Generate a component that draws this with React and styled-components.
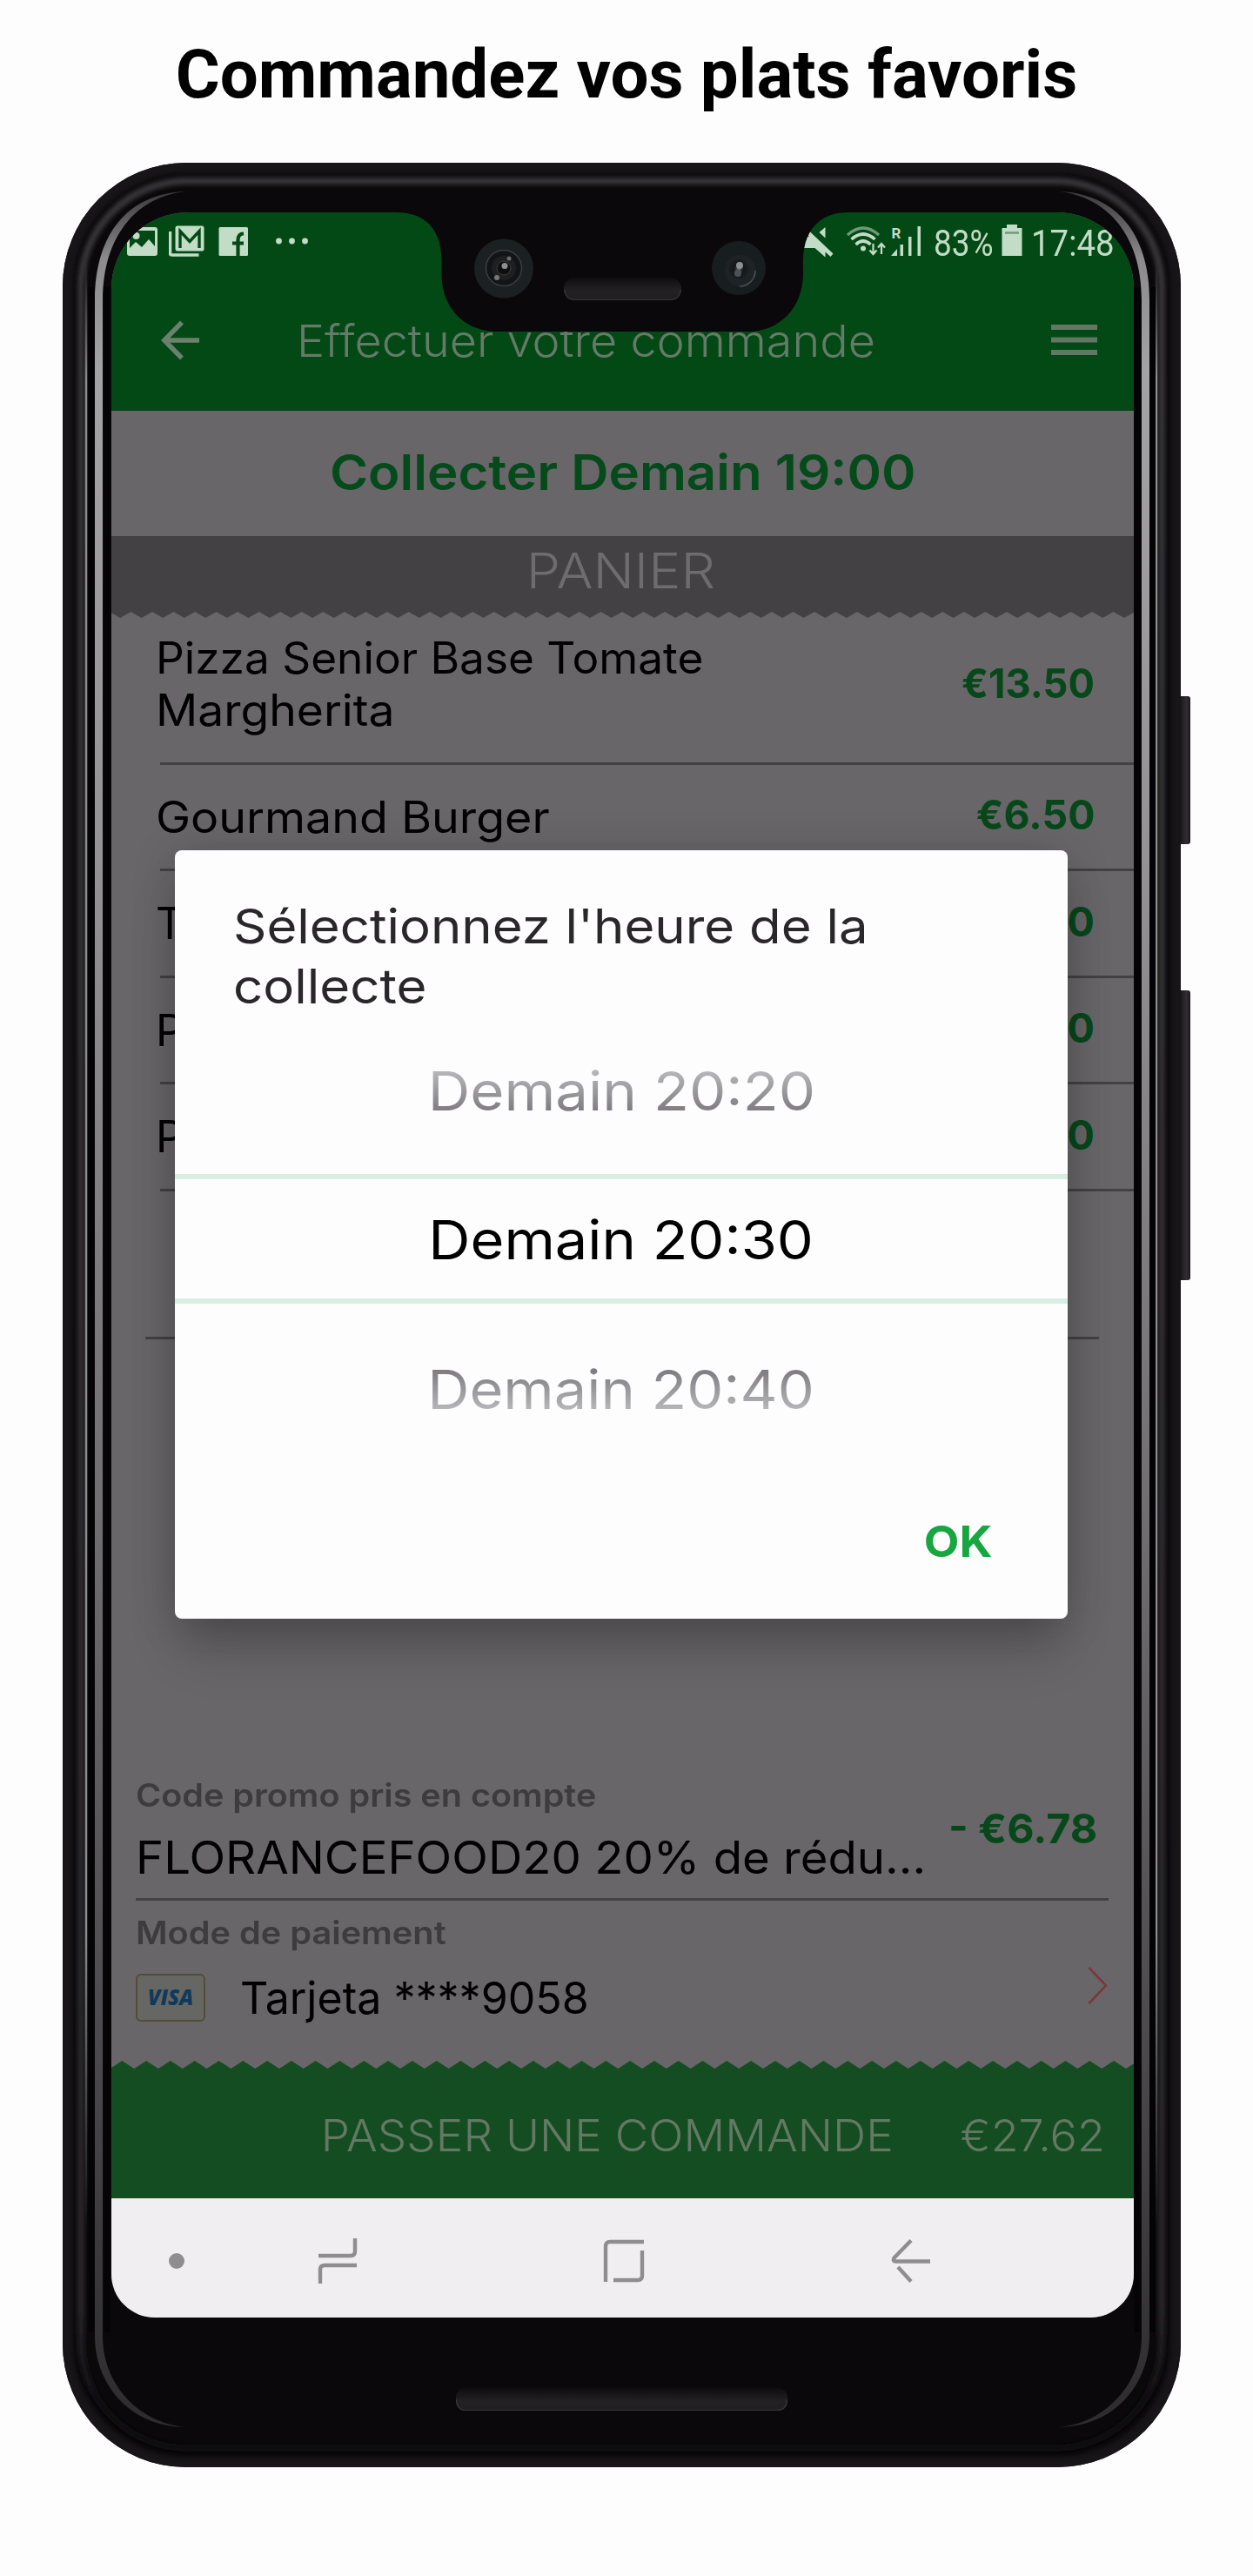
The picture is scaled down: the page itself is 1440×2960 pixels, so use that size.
import React from 'react';
import styled, { createGlobalStyle } from 'styled-components';

const SANS = `Inter, "Open Sans", "Liberation Sans", sans-serif`;
const ROBOTO = `Roboto, "Liberation Sans", sans-serif`;

const GlobalStyle = createGlobalStyle`
  * { box-sizing: border-box; }
  body { margin: 0; background: #fefdfe; font-family: ${SANS}; }
  svg { display: block; flex: none; }
`;

const Page = styled.main`
  display: flex;
  flex-direction: column;
  width: 1440px;
  height: 2960px;
  background: #fefdfe;
`;

const Headline = styled.h1`
  margin: 0 0 16px;
  font: 700 78px/171px ${ROBOTO};
  text-align: center;
  color: #000;
`;

const Phone = styled.div`
  position: relative;
  width: 1285px;
  height: 2648px;
  margin-left: 72px;
  padding: 57px 54px 172px 56px;
  border-radius: 142px;
  background: #0a080b;
  box-shadow: inset 0 0 5px 12px #171518;
`;

const PhoneShell = styled.svg`
  position: absolute;
  left: 0;
  top: 0;
  pointer-events: none;
`;

const Screen = styled.div`
  position: relative;
  display: flex;
  flex-direction: column;
  height: 2419px;
  border-radius: 88px 88px 50px 50px;
  overflow: hidden;
  background: #686669;
`;

const Wide = styled.span`
  display: inline-block;
  transform: scaleX(${(p) => p.$x || 1});
  transform-origin: ${(p) => p.$from || 'left'} center;
`;

const StatusBar = styled.div`
  display: flex;
  align-items: center;
  justify-content: space-between;
  height: 68px;
  padding: 0 25px 0 18px;
  background: #034915;
`;

const StatusGroup = styled.div`
  display: flex;
  align-items: center;
`;

const StatusText = styled.div`
  width: ${(p) => p.$width}px;
  margin: 2px ${(p) => p.$after || 0}px 0 0;
  font: 400 43px/50px ${ROBOTO};
  color: #c3dcc6;
  white-space: nowrap;
`;

const AppBar = styled.header`
  display: flex;
  align-items: center;
  height: 160px;
  padding: 0 42px 0 57px;
  background: #034915;
  border-bottom: 2px solid #08431a;
`;

const AppTitle = styled.div`
  flex: 1;
  padding-left: 111px;
  font-weight: 300;
  font-size: 51px;
  color: #647b67;
`;

const PickupTime = styled.div`
  height: 144px;
  line-height: 143px;
  text-align: center;
  font-size: 56px;
  font-weight: 600;
  color: #054a1a;
`;

const BasketTitle = styled.div`
  height: 87px;
  line-height: 81px;
  padding-right: 4px;
  text-align: center;
  font-size: 56px;
  font-weight: 300;
  color: #6e6c6f;
  background: #434144;
`;

const ZigzagStrip = styled.svg`
  margin-bottom: ${(p) => (p.$overlap ? -7 : 0)}px;
`;

const ItemRow = styled.div`
  display: flex;
  align-items: center;
  justify-content: space-between;
  height: ${(p) => p.$height}px;
  padding: 0 45px ${(p) => p.$lift || 0}px 51px;
`;

const ItemName = styled.div`
  display: flex;
  flex-direction: column;
  font-size: 50px;
  line-height: 60px;
  color: #000;
  white-space: nowrap;
`;

const Price = styled.div`
  margin-bottom: ${(p) => (p.$raise === undefined ? 5 : p.$raise)}px;
  font-size: 47px;
  font-weight: 700;
  line-height: 60px;
  color: #07481b;
  white-space: nowrap;
`;

const Divider = styled.div`
  height: 3px;
  margin: 0 ${(p) => p.$right || 0}px 0 ${(p) => p.$left || 0}px;
  background: #434144;
`;

const Blank = styled.div`
  height: ${(p) => p.$height}px;
`;

const PromoRow = styled.section`
  display: flex;
  align-items: center;
  justify-content: space-between;
  height: 142px;
  margin-top: auto;
  padding: 0 42px 14px 28px;
`;

const SmallLabel = styled.div`
  font-size: 37px;
  font-weight: 600;
  line-height: 48px;
  color: #3d3b3e;
  white-space: nowrap;
`;

const PromoCode = styled.div`
  margin-top: 16px;
  font-size: 52px;
  line-height: 64px;
  color: #000;
  white-space: nowrap;
`;

const PaymentRow = styled.section`
  display: flex;
  justify-content: space-between;
  align-items: flex-end;
  height: 184px;
  padding: 13px 30px 45px 28px;
`;

const CardLine = styled.div`
  display: flex;
  align-items: center;
  gap: 40px;
  height: 56px;
  margin-top: 22px;
  font-size: 51px;
  color: #000;
`;

const VisaBadge = styled.div`
  display: flex;
  align-items: center;
  justify-content: center;
  width: 80px;
  height: 55px;
  border: 2px solid #514d38;
  border-radius: 6px;
  background: #666763;
  font: italic 800 24px/1 "Open Sans", ${SANS};
  color: #103a5c;
`;

const Chevron = styled.svg`
  margin-bottom: 20px;
`;

const OrderBar = styled.footer`
  display: flex;
  align-items: center;
  justify-content: flex-end;
  gap: 80px;
  height: 149px;
  padding: 3px 33px 0 0;
  background: #154d22;
  font-size: 51px;
  font-weight: 300;
  color: #637964;
  white-space: nowrap;
`;

const NavBar = styled.nav`
  display: flex;
  align-items: center;
  height: 137px;
  padding: 7px 0 0 66px;
  background: #f0eef1;
`;

const NavDot = styled.div`
  width: 18px;
  height: 18px;
  margin-right: 153px;
  border-radius: 50%;
  background: #8f8d90;
`;

const NavIcon = styled.svg`
  margin-right: ${(p) => p.$after || 0}px;
`;

const Dialog = styled.div`
  position: absolute;
  left: 73px;
  top: 733px;
  display: flex;
  flex-direction: column;
  width: 1026px;
  height: 883px;
  border-radius: 8px;
  background: #fefdfe;
  box-shadow: 0 42px 56px -8px rgba(0, 0, 0, 0.2), 0 4px 50px rgba(0, 0, 0, 0.18);
`;

const DialogTitle = styled.div`
  display: flex;
  flex-direction: column;
  align-items: flex-start;
  padding: 53px 60px 0 67px;
  font-size: 55px;
  line-height: 68.5px;
  color: #29272a;
  white-space: nowrap;
`;

const Option = styled.div`
  display: flex;
  align-items: center;
  justify-content: center;
  height: ${(p) => p.$height}px;
  padding-bottom: ${(p) => p.$lift || 0}px;
  font-size: 62px;
  line-height: 80px;
  color: #000;
`;

const SelectedOption = styled(Option)`
  padding-top: 3px;
  border: 6px solid #d7efe2;
  border-width: 6px 0;
`;

const Faded = styled(Wide)`
  background: linear-gradient(${(p) => (p.$up ? '0deg' : '180deg')}, #bebdbf 14%, #747276 88%);
  -webkit-background-clip: text;
  background-clip: text;
  color: transparent;
`;

const DialogActions = styled.div`
  display: flex;
  align-items: center;
  justify-content: flex-end;
  flex: 1;
  padding: 0 87px 14px 0;
`;

const OkButton = styled.button`
  padding: 0;
  border: 0;
  background: none;
  font: 700 50px/60px ${SANS};
  color: #17a63f;
`;

function Zigzag({ color, offset, period, height, down }) {
  const tip = down ? height : 0;
  const base = down ? 0 : height;
  const pts = [`${-3 * period},${base}`];
  for (let x = offset - period; x < 1175 + period; x += period) {
    pts.push(`${x},${tip}`, `${x + period / 2},${base}`);
  }
  return (
    <ZigzagStrip width="1175" height={height} $overlap={down}>
      <polygon fill={color} points={pts.join(' ')} />
    </ZigzagStrip>
  );
}

const LIGHT = '#c3dcc6';
const GREEN = '#034915';

const StatusIcon = styled.svg`
  margin-right: ${(p) => p.$after || 0}px;
`;

function NotificationIcons() {
  return (
    <StatusGroup>
      <StatusIcon width="35" height="40" viewBox="146 258 35 40" $after={13}>
        <path fill={LIGHT} fillRule="evenodd" d="M149 261h29a3 3 0 0 1 3 3v27a3 3 0 0 1-3 3h-29a3 3 0 0 1-3-3v-27a3 3 0 0 1 3-3zM149 265v20l7-7 7 6 8-9 7 8v-18z" />
        <circle cx="156.5" cy="271" r="4" fill={LIGHT} />
      </StatusIcon>
      <StatusIcon width="41" height="40" viewBox="195 258 41 40" $after={16}>
        <path d="M196.500 266v25a2 2 0 0 0 2 2h31" fill="none" stroke={LIGHT} strokeWidth="3.500" />
        <rect x="202.500" y="259.500" width="33" height="29" rx="2.500" fill={LIGHT} />
        <path d="M208 285v-19.500l11 12 11-12V285" fill="none" stroke={GREEN} strokeWidth="3.400" />
      </StatusIcon>
      <StatusIcon width="34" height="40" viewBox="251 258 34 40" $after={32}>
        <rect x="251.500" y="261" width="33.500" height="33" rx="1.500" fill={LIGHT} />
        <path d="M273.500 294v-18q0-7.500 6.500-7.500M267 279.500h13" fill="none" stroke={GREEN} strokeWidth="4.200" />
      </StatusIcon>
      <StatusIcon width="38" height="40" viewBox="317 258 38 40">
        <circle cx="320.500" cy="277" r="3.400" fill={LIGHT} />
        <circle cx="335.500" cy="277" r="3.400" fill={LIGHT} />
        <circle cx="350.500" cy="277" r="3.400" fill={LIGHT} />
      </StatusIcon>
    </StatusGroup>
  );
}

function SystemIcons() {
  return (
    <StatusGroup>
      <StatusIcon width="40" height="40" viewBox="920 258 40 40" $after={13}>
        <path fill={LIGHT} d="M948.500 261v12.500l-7-6.500zM928.500 264l29 27.500-3 3.500-6-5.500v6l-12-10.500H921v-13h9l-4.500-4.500z" />
      </StatusIcon>
      <StatusIcon width="46" height="40" viewBox="973 258 46 40" $after={4}>
        <g fill="none" strokeLinecap="butt">
          <path d="M974 270q18-16 36 0" stroke="#6f9a78" strokeWidth="3.200" />
          <path d="M978.500 275q13.500-12 27 0" stroke={LIGHT} strokeWidth="3.600" />
          <path d="M983.500 281q8.500-8 17 0" stroke={LIGHT} strokeWidth="3.600" />
          <path d="M1003.500 280v12m-4-4.500 4 4.500 4-4.500M1013 292v-12m-4 4.500 4-4.500 4 4.500" stroke={LIGHT} strokeWidth="2.200" />
        </g>
        <circle cx="992" cy="285.500" r="3" fill={LIGHT} />
      </StatusIcon>
      <StatusIcon width="38" height="40" viewBox="1023 258 38 40" $after={12}>
        <text x="1024.500" y="273.500" fill={LIGHT} fontFamily={ROBOTO} fontSize="17" fontWeight="700">R</text>
        <path fill={LIGHT} d="M1024 294l7-8v8zM1034.500 281h3.500v13h-3.500zM1044 272h3.500v22H1044zM1054.500 260h3.500v34h-3.500z" />
      </StatusIcon>
      <StatusText $width={66} $after={12}><Wide $x={0.86}>83%</Wide></StatusText>
      <StatusIcon width="24" height="40" viewBox="1151 258 24 40" $after={10}>
        <path fill={LIGHT} d="M1157 258h12v4h5.500v32h-23v-32h5.500z" />
        <path d="M1155 267.500h16" stroke="#6f9a78" strokeWidth="2.500" />
      </StatusIcon>
      <StatusText $width={93}><Wide $x={0.893}>17:48</Wide></StatusText>
    </StatusGroup>
  );
}

function Shell() {
  return (
    <PhoneShell width="1297" height="2648" viewBox="72 187 1297 2648">
      <defs>
        <linearGradient id="gleam" x1="0" y1="220" x2="0" y2="2790" gradientUnits="userSpaceOnUse">
          <stop offset="0" stopColor="#3a393b" />
          <stop offset="0.03" stopColor="#8b8a8c" />
          <stop offset="0.08" stopColor="#a3a2a5" />
          <stop offset="0.3" stopColor="#949295" />
          <stop offset="0.6" stopColor="#6f6d70" />
          <stop offset="0.85" stopColor="#48464a" />
          <stop offset="1" stopColor="#2c2b2e" />
        </linearGradient>
        <linearGradient id="rimLine" x1="0" y1="300" x2="0" y2="2560" gradientUnits="userSpaceOnUse">
          <stop offset="0" stopColor="#8b8a8d" stopOpacity="0" />
          <stop offset="0.06" stopColor="#8b8a8d" />
          <stop offset="0.85" stopColor="#8b8a8d" />
          <stop offset="1" stopColor="#8b8a8d" stopOpacity="0" />
        </linearGradient>
        <linearGradient id="rim" x1="0" y1="187" x2="0" y2="2835" gradientUnits="userSpaceOnUse">
          <stop offset="0" stopColor="#38363a" />
          <stop offset="0.93" stopColor="#29272a" />
          <stop offset="0.98" stopColor="#0a080b" />
        </linearGradient>
        <linearGradient id="grille" x1="0" y1="0" x2="0" y2="1">
          <stop offset="0" stopColor="#0f0d10" />
          <stop offset="0.6" stopColor="#232124" />
          <stop offset="1" stopColor="#201e21" />
        </linearGradient>
        <linearGradient id="sideButton" x1="0" y1="0" x2="1" y2="0">
          <stop offset="0" stopColor="#1b191c" />
          <stop offset="0.6" stopColor="#302e31" />
          <stop offset="1" stopColor="#1b191c" />
        </linearGradient>
        <radialGradient id="lens">
          <stop offset="0" stopColor="#77797b" />
          <stop offset="0.22" stopColor="#3c3f42" />
          <stop offset="0.45" stopColor="#15171a" />
          <stop offset="1" stopColor="#1b2023" />
        </radialGradient>
        <filter id="soft"><feGaussianBlur stdDeviation="2.500" /></filter>
      </defs>

      <path fill="url(#sideButton)" d="M1357 800h8a3 3 0 0 1 3 3v164a3 3 0 0 1-3 3h-8zM1357 1138h8a3 3 0 0 1 3 3v327a3 3 0 0 1-3 3h-8z" />

      <rect x="93" y="208" width="1242" height="2605" rx="122" fill="none" stroke="url(#rim)" strokeWidth="8" filter="url(#soft)" />
      <path d="M99 300V2560M1329 300V2560" stroke="url(#rimLine)" strokeWidth="2.500" fill="none" />
      <path d="M105 330V2680M123 330V2680M1307 330V2680M1324.500 330V2680" stroke="#040305" strokeWidth="7" />

      <path fill="url(#gleam)" d="M213 220C150 222 109 266 109 345V2685C109 2735 145 2788 213 2789C160 2784 118 2740 118 2685V345C118 270 158 226 213 220Z" />
      <path fill="url(#gleam)" d="M1217 220C1280 222 1321 266 1321 345V2685C1321 2735 1285 2788 1217 2789C1270 2784 1312 2740 1312 2685V345C1312 270 1272 226 1217 220Z" />

      <path fill="#0a080b" d="M455 242V244C490 244 507.500 265 507.500 300V315C507.500 355 535 381 572 381H860C897 381 923 352 923 315V300C923 265 942 244 975 244V242Z" />

      <rect x="648" y="319" width="135" height="25" rx="12.500" fill="url(#grille)" />
      <path d="M648.500 333c1 7 5 11.500 12 11.500h110c7 0 11-4.500 12-11.500" fill="none" stroke="#3a383b" strokeWidth="1.200" />

      <circle cx="579" cy="308.500" r="34" fill="#1b2023" />
      <circle cx="579" cy="308" r="20.500" fill="#121417" stroke="#3d4043" strokeWidth="1.400" />
      <circle cx="579" cy="308" r="14" fill="#1d1f21" />
      <circle cx="579" cy="308" r="8" fill="#0e0f11" stroke="#3a3c3e" strokeWidth="1" />
      <circle cx="580" cy="305.500" r="3.500" fill="#8d8e90" />
      <circle cx="585" cy="297" r="2.500" fill="#6a6b6d" />
      <circle cx="571" cy="319" r="3" fill="#77787a" />

      <circle cx="849" cy="308" r="31" fill="#181d20" />
      <circle cx="851" cy="311" r="18" fill="#1e2326" />
      <path d="M868 311a18 18 0 0 1-18 18" fill="none" stroke="#4c5154" strokeWidth="1.600" />
      <circle cx="849" cy="309" r="12" fill="url(#lens)" />
      <circle cx="850" cy="305" r="4" fill="#8d8f92" />
      <circle cx="848" cy="314" r="4" fill="#4c5358" />

      <rect x="524" y="2744" width="381" height="26" rx="11" fill="url(#grille)" />
      <path d="M524.500 2757c0 8 4 12.500 11 12.500h357c8 0 12-4.500 12-12.500" fill="none" stroke="#3a383b" strokeWidth="1.200" />
    </PhoneShell>
  );
}

const ITEMS = [
  { lines: [['Pizza Senior Base Tomate', 1.027], ['Margherita', 1.068]], price: '€13.50', priceX: 0.962, height: 173, lift: 7, raise: 2 },
  { lines: [['Gourmand Burger', 1.074]], price: '€6.50', priceX: 0.987, height: 119 },
  { lines: [['T', 1]], price: '0', height: 120 },
  { lines: [['P', 1]], price: '0', height: 119 },
  { lines: [['P', 1]], price: '0', height: 120 },
];

export default function App() {
  return (
    <Page>
      <GlobalStyle />
      <Headline>Commandez vos plats favoris</Headline>
      <Phone>
        <Screen>
          <StatusBar>
            <NotificationIcons />
            <SystemIcons />
          </StatusBar>
          <AppBar>
            <svg width="45" height="46" viewBox="0 0 45 46" fill="none" stroke="#6c806e" strokeWidth="5.500">
              <path d="M44 23H4M24 2.500 3.800 23 24 43.500" />
            </svg>
            <AppTitle><Wide $x={1.058}>Effectuer votre commande</Wide></AppTitle>
            <svg width="53" height="36" viewBox="0 0 53 36" fill="#627865">
              <path d="M0 0h53v6H0zM0 14.500h53v6H0zM0 29h53v6H0z" />
            </svg>
          </AppBar>
          <PickupTime><Wide $x={1.07} $from="center">Collecter Demain 19:00</Wide></PickupTime>
          <BasketTitle><Wide $x={1.115} $from="center">PANIER</Wide></BasketTitle>
          <Zigzag color="#434144" offset={10.1} period={24.55} height={7} down />
          {ITEMS.map((item, i) => (
            <React.Fragment key={i}>
              <ItemRow $height={item.height} $lift={item.lift}>
                <ItemName>
                  {item.lines.map(([text, x]) => (
                    <Wide key={text} $x={x}>{text}</Wide>
                  ))}
                </ItemName>
                <Price $raise={item.raise}><Wide $x={item.priceX} $from="right">{item.price}</Wide></Price>
              </ItemRow>
              <Divider $left={56} />
            </React.Fragment>
          ))}
          <Blank $height={167} />
          <Divider $left={39} $right={40} />

          <PromoRow>
            <div>
              <SmallLabel><Wide $x={1.069}>Code promo pris en compte</Wide></SmallLabel>
              <PromoCode><Wide $x={1.048}>FLORANCEFOOD20 20% de rédu...</Wide></PromoCode>
            </div>
            <Price $raise={4}><Wide $x={1.03} $from="right">- €6.78</Wide></Price>
          </PromoRow>
          <Divider $left={28} $right={29} />
          <PaymentRow>
            <div>
              <SmallLabel><Wide $x={1.073}>Mode de paiement</Wide></SmallLabel>
              <CardLine>
                <VisaBadge>VISA</VisaBadge>
                <Wide $x={0.981}>Tarjeta ****9058</Wide>
              </CardLine>
            </div>
            <Chevron width="23" height="43" viewBox="0 0 23 43" fill="none" stroke="#7a383a" strokeWidth="2.600">
              <path d="M1.500 1 21 21.500 1.500 42" />
            </Chevron>
          </PaymentRow>
          <Zigzag color="#154d22" offset={12.3} period={27.8} height={9} />
          <OrderBar>
            <Wide $x={1.04} $from="right">PASSER UNE COMMANDE</Wide>
            <Wide $x={1.021} $from="right">€27.62</Wide>
          </OrderBar>
          <NavBar>
            <NavDot />
            <NavIcon width="46" height="52" viewBox="0 0 46 52" fill="none" stroke="#8f8d90" strokeWidth="4.400" $after={282}>
              <path d="M43 0v15q0 5-5 5H1M3 52V36q0-5 5-5h37" />
            </NavIcon>
            <NavIcon width="48" height="50" viewBox="0 0 48 50" fill="none" stroke="#8f8d90" strokeWidth="4.400" $after={283}>
              <path d="M3 49V8q0-5 5-5h39M45 13v29q0 5-5 5H12" />
            </NavIcon>
            <NavIcon width="46" height="50" viewBox="0 0 46 50" fill="none" stroke="#8f8d90" strokeWidth="4.400">
              <path d="M23 1.500 3.500 21.500q-2 4 2 4H45M8 32 23 48.500" />
            </NavIcon>
          </NavBar>

          <Dialog>
            <DialogTitle>
              <Wide $x={1.0885}>Sélectionnez l'heure de la</Wide>
              <Wide $x={1.09}>collecte</Wide>
            </DialogTitle>
            <Option $height={182} $lift={9}><Faded $x={1.084} $from="center">Demain 20:20</Faded></Option>
            <SelectedOption $height={149}><Wide $x={1.076} $from="center">Demain 20:30</Wide></SelectedOption>
            <Option $height={197}><Faded $up $x={1.076} $from="center">Demain 20:40</Faded></Option>
            <DialogActions><OkButton><Wide $x={1.056} $from="right">OK</Wide></OkButton></DialogActions>
          </Dialog>
        </Screen>
        <Shell />
      </Phone>
    </Page>
  );
}
